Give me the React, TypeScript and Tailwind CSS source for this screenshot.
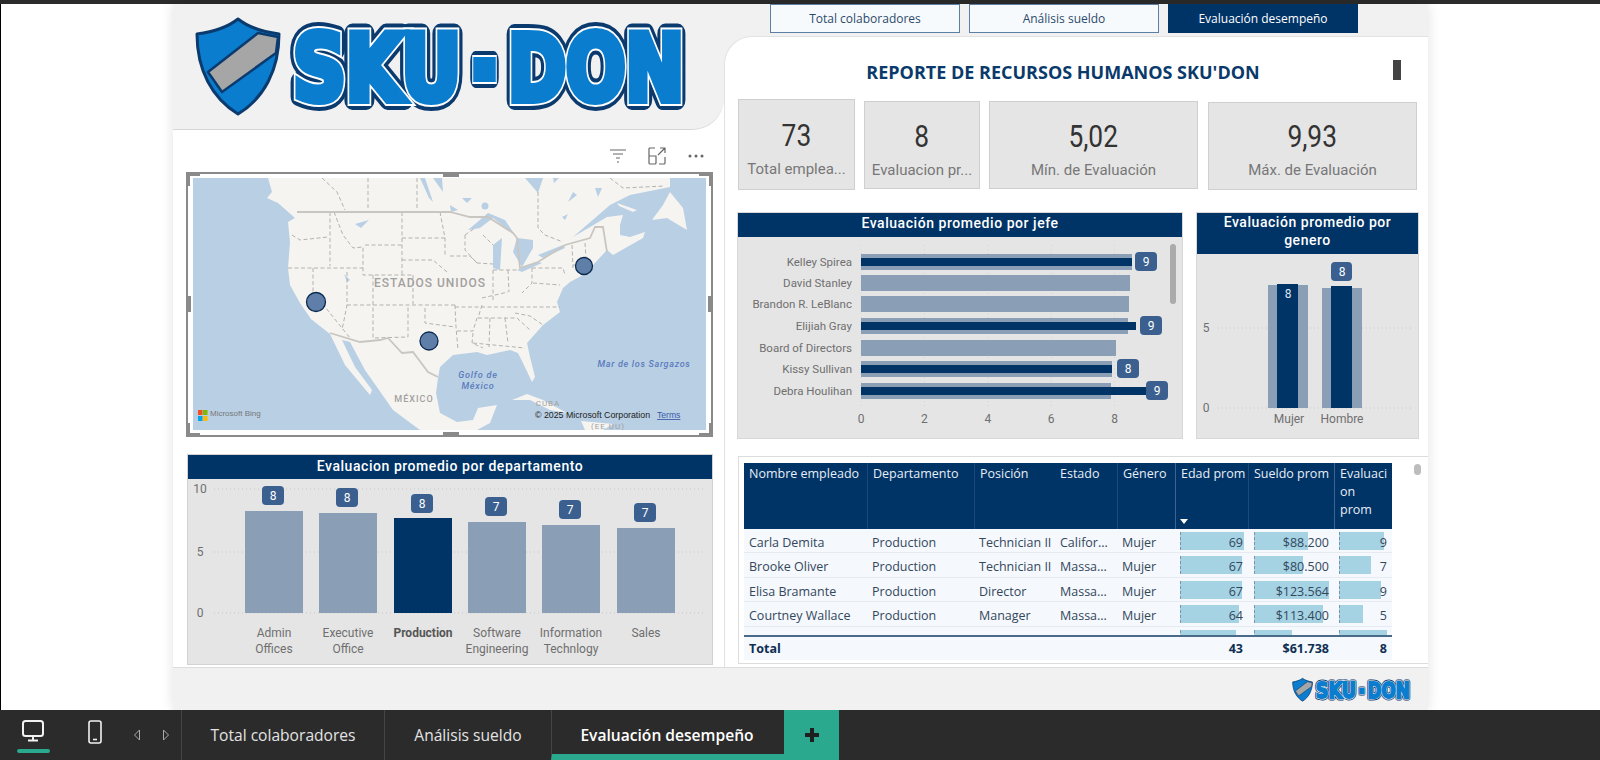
import React from "react";

const Logo = ({ id, className }: { id: string; className: string }) => (
  <svg viewBox="0 0 520 115" className={className}>
    <defs>
      <g id={id} fontFamily="'DejaVu Sans', sans-serif" fontWeight="700">
        <text x="103" y="90" fontSize="90" textLength="168" lengthAdjust="spacingAndGlyphs">SKU</text>
        <text x="282" y="94" fontSize="120" textLength="25" lengthAdjust="spacingAndGlyphs">-</text>
        <text x="318" y="90" fontSize="90" textLength="176" lengthAdjust="spacingAndGlyphs">DON</text>
      </g>
    </defs>
    <path d="M48 9C38 17 22 22 7 24C7 60 22 88 48 104C74 88 89 60 89 24C74 22 58 17 48 9Z" fill="#0a7dcf" stroke="#0b3a6e" strokeWidth="3" strokeLinejoin="round" />
    <path d="M68 23L88 27L86 43L32 82L18 62Z" fill="#a6a6a6" stroke="#0b3a6e" strokeWidth="2.5" strokeLinejoin="round" />
    <use href={`#${id}`} fill="#0b3a6e" stroke="#0b3a6e" strokeWidth="20" strokeLinejoin="round" />
    <use href={`#${id}`} fill="#fff" stroke="#fff" strokeWidth="12" strokeLinejoin="miter" />
    <use href={`#${id}`} fill="#0a7dcf" stroke="#0a7dcf" strokeWidth="8" strokeLinejoin="miter" />
  </svg>
);

const MapView = () => {
  const states =
    "M137 34L137 88M99 57L107 62L135 59M95 90L170 90M120 90L120 114L157 160M141 34L150 57L160 70L170 69L170 97L220 97M172 67L209 67M209 34L209 97M209 60L252 60M247 34L252 60L252 79M209 82L240 82L254 94M154 94L154 127L149 152M180 97L180 160L215 159L215 127M220 97L220 126M154 127L262 127M129 0L144 14L152 32M175 0L175 30M224 0L224 32M232 130L232 145L262 149M262 127L263 149L265 172M264 153L280 153L284 140M280 155L279 165L290 170M285 140L324 140L337 152M297 140L296 169M312 140L315 165M280 165L332 170M322 135L337 138L350 147M289 127L285 140M262 129L367 129M272 57L272 72L284 85L300 86M272 57L282 50M290 57L300 67M257 78L277 78L284 85M300 92L300 122M315 92L316 114M339 90L339 105L329 115M300 92L325 92M339 90L370 90L372 97M340 105L367 107M379 67L380 90M392 65L393 80M380 87L394 87M345 14L345 50L352 57L370 64M417 0L430 10L472 8M289 120L315 114";
  return (
    <svg viewBox="0 0 513 252" className="block w-[513px] h-[252px]">
      <rect width="513" height="252" fill="#b9cfe4" />
      <path
        fill="#f6f4f1"
        strokeLinejoin="round"
        d="M75 0L79 14L74 20L85 25L102 40L95 44L97 64L95 90L97 107L107 125L118 141L137 156L152 187L177 217L179 212L162 189L149 162L157 164L172 192L200 232L227 252L284 252L297 245L304 227L285 230L280 242L264 244L247 235L243 215L245 200L247 189L260 177L284 174L294 177L317 172L325 175L330 185L339 204L342 199L337 179L334 165L350 147L367 134L364 124L370 110L377 104L390 97L400 87L414 72L420 77L450 60L452 54L437 59L427 57L427 47L430 37L414 39L380 59L417 27L437 17L477 9L477 0Z"
      />
      <path fill="#f6f4f1" d="M477 14L490 30L494 52L489 49L474 40L459 42L470 27ZM319 222L334 216L350 222L374 235L357 232L337 222ZM388 243L420 246L410 252L392 252ZM424 25L444 32L440 34L426 28Z" />
      <path
        fill="#b9cfe4"
        d="M275 52L295 35L312 42L322 57L300 40L287 50ZM300 67L309 60L307 92L300 90ZM324 60L340 62L340 70L329 89L320 74ZM324 92L345 84L349 85L329 94ZM345 77L370 67L372 70L350 80ZM332 0L350 0L345 15ZM360 0L366 0L361 5ZM380 14L375 24L384 17ZM402 10L409 10L405 19ZM269 20L279 20L274 25ZM257 27L265 32L258 34ZM227 0L232 0L240 24L236 20ZM240 0L249 0L250 14ZM369 39L375 36L372 42ZM162 46L176 42L168 50ZM151 96L157 102L154 104Z"
      />
      <circle cx="292" cy="28" r="3.5" fill="#b9cfe4" />
      <path fill="none" stroke="#b4b2ae" strokeWidth="1" strokeDasharray="4 2.5" d={states} />
      <path fill="none" stroke="#c9c6c1" strokeWidth="1.8" d="M104 34L257 34L277 39L295 39L320 55L324 60L327 90L345 84L372 67L397 60L402 49L410 49L414 74M137 155L167 164L187 162L195 160L209 175L220 174L235 194L245 199" />
      {[[123, 124, 9.5], [236, 163, 9], [391, 88, 8.5]].map(([x, y, r]) => (
        <circle key={x} cx={x} cy={y} r={r} fill="#5f7fa8" stroke="#0b2a50" strokeWidth="1.3" />
      ))}
      <g fontFamily="Roboto, sans-serif">
        <text x="237" y="109" textAnchor="middle" fontSize="12" fontWeight="500" letterSpacing="1" fill="#a3a19e">ESTADOS UNIDOS</text>
        <text x="221" y="224" textAnchor="middle" fontSize="9" fontWeight="500" letterSpacing="1" fill="#a3a19e">MÉXICO</text>
        <text x="355" y="228" textAnchor="middle" fontSize="8" letterSpacing="1" fill="#a3a19e">CUBA</text>
        <text x="285" y="200" textAnchor="middle" fontSize="9" fontWeight="500" fontStyle="italic" letterSpacing="0.8" fill="#5a7cbd">Golfo de</text>
        <text x="285" y="211" textAnchor="middle" fontSize="9" fontWeight="500" fontStyle="italic" letterSpacing="0.8" fill="#5a7cbd">México</text>
        <text x="451" y="189" textAnchor="middle" fontSize="9" fontWeight="500" fontStyle="italic" letterSpacing="0.7" fill="#5a7cbd">Mar de los Sargazos</text>
        <text x="415" y="251" textAnchor="middle" fontSize="8" letterSpacing="1" fill="#a3a19e">(EE UU)</text>
      </g>
      <g fontFamily="'Liberation Sans', sans-serif">
        <text x="342" y="240" fontSize="8.8" fill="#222">© 2025 Microsoft Corporation</text>
        <text x="464" y="240" fontSize="8.6" fill="#3a5aa8" textDecoration="underline">Terms</text>
        <text x="17" y="238" fontSize="8" fill="#777">Microsoft Bing</text>
      </g>
      <rect x="5" y="232" width="4.5" height="5" fill="#f25022" />
      <rect x="10" y="232" width="4.5" height="5" fill="#7fba00" />
      <rect x="5" y="238" width="4.5" height="5" fill="#00a4ef" />
      <rect x="10" y="238" width="4.5" height="5" fill="#ffb900" />
    </svg>
  );
};

const Handle = ({ className }: { className: string }) => <span className={`absolute bg-[#8a8a8a] ${className}`} />;

const Kpi = ({ value, label, className, top }: { value: string; label: string; className: string; top: string }) => (
  <div className={`flex flex-col items-center justify-start bg-[#e5e5e5] border border-[#cfcfcf] ${className}`}>
    <div className={`text-[31px] leading-[34px] text-[#333] font-['Roboto'] scale-x-[0.85] ${top}`}>{value}</div>
    <div className="mt-[6px] text-[15px] leading-[20px] text-[#777] font-['Roboto'] whitespace-nowrap">{label}</div>
  </div>
);

const PanelHead = ({ children, className = "" }: { children: React.ReactNode; className?: string }) => (
  <div className={`bg-[#003366] text-white text-center font-['Roboto'] font-medium text-[14px] tracking-[0.55px] ${className}`}>{children}</div>
);

const tick = { fontSize: 12, fill: "#6f6f6f", fontFamily: "Roboto, sans-serif" };
const Bossy = [
  { n: "Kelley Spirea", l: 271, d: 271, b: 1135, y: 25 },
  { n: "David Stanley", l: 269, y: 46 },
  { n: "Brandon R. LeBlanc", l: 268, y: 67 },
  { n: "Elijiah Gray", l: 267, d: 275, b: 1140, y: 89 },
  { n: "Board of Directors", l: 255, y: 111 },
  { n: "Kissy Sullivan", l: 251, d: 251, b: 1117, y: 132 },
  { n: "Debra Houlihan", l: 250, d: 290, b: 1146, y: 154 },
];

const BossChart = () => (
  <svg viewBox="0 0 444 201" className="block w-[444px] h-[201px]">
    {[0, 2, 4, 6, 8].map((v) => (
      <g key={v}>
        <line x1={123 + v * 31.7} x2={123 + v * 31.7} y1="8" y2="172" stroke="#d3d3d3" strokeDasharray="1 3" />
        <text x={123 + v * 31.7} y="186" textAnchor="middle" {...tick}>{v}</text>
      </g>
    ))}
    {Bossy.map((r) => (
      <g key={r.n}>
        <text x="114" y={r.y + 4} textAnchor="end" {...tick} fontSize="11.5">{r.n}</text>
        <rect x="123" y={r.y - 8} width={r.l} height="16" fill="#8a9fb6" />
        {r.d && <rect x="123" y={r.y - 4} width={r.d} height="8" fill="#003366" />}
        {r.b && (
          <g>
            <rect x={r.b - 738} y={r.y - 10} width="22" height="19" rx="4" fill="#3b5f8f" />
            <text x={r.b - 727} y={r.y + 4} textAnchor="middle" fontSize="12" fontFamily="Roboto, sans-serif" fill="#fff">{r.n === "Kissy Sullivan" ? 8 : 9}</text>
          </g>
        )}
      </g>
    ))}
    <rect x="432" y="7" width="6" height="60" rx="3" fill="#ababab" />
  </svg>
);

const GenderChart = () => (
  <svg viewBox="0 0 221 184" className="block w-[221px] h-[184px]">
    {[[74, "5"], [154, "0"]].map(([y, t]) => (
      <g key={t as string}>
        <line x1="21" x2="215" y1={y as number} y2={y as number} stroke="#c6c6c6" strokeDasharray="1 3" />
        <text x="9" y={(y as number) + 4} textAnchor="middle" {...tick}>{t}</text>
      </g>
    ))}
    <rect x="71" y="31" width="40" height="123" fill="#8a9fb6" />
    <rect x="80" y="30" width="21" height="124" fill="#003366" />
    <rect x="125" y="34" width="40" height="120" fill="#8a9fb6" />
    <rect x="134" y="32" width="21" height="122" fill="#003366" />
    <rect x="134" y="8" width="21" height="19" rx="4" fill="#3b5f8f" />
    <text x="145" y="22" textAnchor="middle" fontSize="12" fontFamily="Roboto, sans-serif" fill="#fff">8</text>
    <text x="91" y="44" textAnchor="middle" fontSize="12" fontFamily="Roboto, sans-serif" fill="#dfe6ee">8</text>
    <text x="92" y="169" textAnchor="middle" {...tick}>Mujer</text>
    <text x="145" y="169" textAnchor="middle" {...tick}>Hombre</text>
  </svg>
);

const depts = [
  { x: 57, top: 32, box: 7, v: 8, l: ["Admin", "Offices"] },
  { x: 131, top: 34, box: 9, v: 8, l: ["Executive", "Office"] },
  { x: 206, top: 39, box: 15, v: 8, l: ["Production"], on: true },
  { x: 280, top: 43, box: 18, v: 7, l: ["Software", "Engineering"] },
  { x: 354, top: 46, box: 21, v: 7, l: ["Information", "Technlogy"] },
  { x: 429, top: 49, box: 24, v: 7, l: ["Sales"] },
];

const DeptChart = () => (
  <svg viewBox="0 0 524 185" className="block w-[524px] h-[185px]">
    {[[10, "10"], [73, "5"], [134, "0"]].map(([y, t]) => (
      <g key={t as string}>
        <line x1="26" x2="517" y1={y as number} y2={y as number} stroke="#c6c6c6" strokeDasharray="1 3" />
        <text x="12" y={(y as number) + 4} textAnchor="middle" {...tick}>{t}</text>
      </g>
    ))}
    {depts.map((d) => (
      <g key={d.x}>
        <rect x={d.x} y={d.top} width="58" height={134 - d.top} fill={d.on ? "#003366" : "#8a9fb6"} />
        <rect x={d.x + 17} y={d.box} width="22" height="19" rx="4" fill="#3b5f8f" />
        <text x={d.x + 28} y={d.box + 14} textAnchor="middle" fontSize="12" fontFamily="Roboto, sans-serif" fill="#fff">{d.v}</text>
        {d.l.map((t, i) => (
          <text key={t} x={d.x + 29} y={158 + i * 16} textAnchor="middle" fontSize="12" fontFamily="Roboto, sans-serif" fontWeight={d.on ? 700 : 400} fill={d.on ? "#555" : "#6f6f6f"}>{t}</text>
        ))}
      </g>
    ))}
  </svg>
);

const cols = "grid grid-cols-[123px_107px_81px_62px_58px_73px_86px_58px]";
const rows = [
  ["Carla Demita", "Production", "Technician II", "Califor...", "Mujer", "69", "$88.200", "9", 64, 54, 45],
  ["Brooke Oliver", "Production", "Technician II", "Massa...", "Mujer", "67", "$80.500", "7", 62, 49, 32],
  ["Elisa Bramante", "Production", "Director", "Massa...", "Mujer", "67", "$123.564", "9", 62, 75, 42],
  ["Courtney Wallace", "Production", "Manager", "Massa...", "Mujer", "64", "$113.400", "5", 59, 69, 24],
  ["", "", "", "", "", "", "", "", 56, 38, 48],
] as (string | number)[][];

const Bar = ({ v, w, ml }: { v: string; w: number; ml: string }) => (
  <div className="relative h-[23px] flex items-center justify-end pr-[5px] text-[12.5px]">
    <span className={`absolute top-[3px] bottom-[2px] bg-[#a5d3e4] border-l border-dashed border-l-[#7d93a8] ${ml}`} style={{ width: w }} />
    <span className="relative top-[2px]">{v}</span>
  </div>
);

const Table = () => (
  <div className="ml-[13px] mt-[18px] h-[208px] bg-white border border-r-0 border-[#dcdcdc] pt-[6px] pl-[5px] relative font-['Open_Sans'] text-[#33475b]">
    <div className={`${cols} w-[648px] h-[66px] bg-[#003366] text-[#e8eef5] text-[12.5px] leading-[18px]`}>
      {["Nombre empleado", "Departamento", "Posición", "Estado", "Género"].map((h, i) => (
        <div key={h} className={`pl-[5px] pt-[2px] whitespace-nowrap ${(i > 0 && i < 3) || i === 4 ? "border-l border-[#1c4a7a]" : ""}`}>{h}</div>
      ))}
      <div className="pl-[5px] pt-[2px] whitespace-nowrap border-l border-[#3a6592] relative">
        Edad prom
        <svg viewBox="0 0 8 5" className="absolute left-[4px] bottom-[5px] w-[8px] h-[5px]"><path d="M0 0H8L4 5Z" fill="#fff" /></svg>
      </div>
      <div className="pl-[5px] pt-[2px] whitespace-nowrap border-l border-[#1c4a7a]">Sueldo prom</div>
      <div className="pl-[5px] pt-[2px] border-l border-[#3a6592]">Evaluaci<br />on<br />prom</div>
    </div>
    <div className="w-[648px] h-[106px] overflow-hidden">
      {rows.map((r, i) => (
        <div key={i} className={`${cols} grid-rows-[23px] h-[24.4px] bg-[#f5f8fd] border-b border-[#e6ebf2] text-[12.5px] leading-[23px] whitespace-nowrap`}>
          {r.slice(0, 5).map((c, j) => <div key={j} className="pl-[5px] pt-[2px]">{c}</div>)}
          <Bar v={r[5] as string} w={r[8] as number} ml="left-[5px]" />
          <Bar v={r[6] as string} w={r[9] as number} ml="left-[6px]" />
          <Bar v={r[7] as string} w={r[10] as number} ml="left-[5px]" />
        </div>
      ))}
    </div>
    <div className={`${cols} w-[648px] h-[25px] bg-[#f5f8fd] border-t-2 border-[#4a6a8a] text-[12.5px] font-bold text-[#0e2f52] leading-[24px]`}>
      <div className="pl-[5px] col-span-5">Total</div>
      <div className="text-right pr-[5px]">43</div>
      <div className="text-right pr-[5px]">$61.738</div>
      <div className="text-right pr-[5px]">8</div>
    </div>
    <span className="absolute right-[7px] top-[7px] w-[7px] h-[11px] rounded-full bg-[#bdbdbd]" />
  </div>
);

export default function App() {
  return (
    <div className="h-[760px] w-[1600px] flex flex-col bg-white overflow-hidden font-['Open_Sans',sans-serif]">
      <div className="h-[4px] bg-[#2b2b2b]" />
      <div className="flex-1 flex border-l border-black pl-[172px] min-h-0">
        <div className="w-[1255px] flex flex-col bg-[#f1f1f1] shadow-[0_0_12px_rgba(0,0,0,0.12)]">
          <div className="h-[663px] flex">
            <div className="w-[551px] bg-white">
              <div className="h-[126px] bg-[#f1f1f1] border-b border-[#d6d6d6] rounded-br-[32px] pt-[6px] pl-[17px]">
                <Logo id="sku-big" className="block w-[520px] h-[115px]" />
              </div>
              <div className="h-[42px] flex items-center justify-end gap-[19px] pr-[20px] pt-[9px]">
                <svg viewBox="0 0 20 16" className="w-[20px] h-[16px]" fill="none" stroke="#666" strokeWidth="1.2"><path d="M2 2H18M5 6H15M8 10H12M9 14H11" /></svg>
                <svg viewBox="0 0 20 20" className="w-[20px] h-[20px]" fill="none" stroke="#666" strokeWidth="1.2"><path d="M8 2H3A1 1 0 0 0 2 3V17A1 1 0 0 0 3 18H8A1 1 0 0 0 9 17V10H2M12 18H17A1 1 0 0 0 18 17V11M11 9L18 2M13 2H18V7" /></svg>
                <svg viewBox="0 0 16 4" className="w-[16px] h-[4px] ml-[2px]" fill="#666"><circle cx="2" cy="2" r="1.5" /><circle cx="8" cy="2" r="1.5" /><circle cx="14" cy="2" r="1.5" /></svg>
              </div>
              <div className="relative ml-[13px] w-[527px] h-[265px] border-2 border-[#8a8a8a] px-[5px] pt-[4px]">
                <MapView />
                <Handle className="-left-[2px] -top-[2px] w-[14px] h-[4px]" />
                <Handle className="-left-[2px] -top-[2px] w-[4px] h-[14px]" />
                <Handle className="-right-[2px] -top-[2px] w-[14px] h-[4px]" />
                <Handle className="-right-[2px] -top-[2px] w-[4px] h-[14px]" />
                <Handle className="-left-[2px] -bottom-[2px] w-[14px] h-[4px]" />
                <Handle className="-left-[2px] -bottom-[2px] w-[4px] h-[14px]" />
                <Handle className="-right-[2px] -bottom-[2px] w-[14px] h-[4px]" />
                <Handle className="-right-[2px] -bottom-[2px] w-[4px] h-[14px]" />
                <Handle className="left-[255px] -top-[2px] w-[16px] h-[5px]" />
                <Handle className="left-[255px] -bottom-[2px] w-[16px] h-[5px]" />
                <Handle className="-left-[2px] top-[122px] w-[5px] h-[16px]" />
                <Handle className="-right-[2px] top-[122px] w-[5px] h-[16px]" />
              </div>
              <div className="ml-[15px] mt-[18px] w-[524px] h-[209px] bg-[#e5e5e5] ring-1 ring-[#d2d2d2]">
                <PanelHead className="h-[24px] leading-[22px]">Evaluacion promedio por departamento</PanelHead>
                <DeptChart />
              </div>
            </div>
            <div className="flex-1 flex flex-col">
              <div className="h-[31px] flex items-start gap-[9px] pl-[46px]">
                {["Total colaboradores", "Análisis sueldo"].map((t) => (
                  <div key={t} className="w-[190px] h-[29px] bg-[#f7fafd] border border-[#5d7fa3] flex items-center justify-center text-[12px] text-[#2c4a6b]">{t}</div>
                ))}
                <div className="w-[190px] h-[29px] bg-[#003366] flex items-center justify-center text-[12px] text-white">Evaluación desempeño</div>
              </div>
              <div className="flex-1 bg-white rounded-tl-[28px] border-t border-l border-[#e2e2e2] mt-[1px]">
                <div className="h-[62px] flex items-center relative">
                  <h1 className="w-full pl-[6px] pr-[33px] mt-[9px] text-center text-[18px] font-bold text-[#0a3a6b]">REPORTE DE RECURSOS HUMANOS SKU'DON</h1>
                  <span className="absolute left-[668px] top-[23px] w-[8px] h-[20px] bg-[#444]" />
                </div>
                <div className="flex items-start pl-[13px] h-[91px]">
                  <Kpi value="73" label="Total emplea..." className="w-[117px] h-[91px]" top="mt-[19px]" />
                  <Kpi value="8" label="Evaluacion pr..." className="w-[116px] h-[88px] ml-[9px] mt-[2px]" top="mt-[18px]" />
                  <Kpi value="5,02" label="Mín. de Evaluación" className="w-[209px] h-[88px] ml-[9px] mt-[2px]" top="mt-[18px]" />
                  <Kpi value="9,93" label="Máx. de Evaluación" className="w-[209px] h-[88px] ml-[10px] mt-[3px]" top="mt-[17px]" />
                </div>
                <div className="flex gap-[15px] pl-[13px] mt-[23px]">
                  <div className="w-[444px] h-[225px] bg-[#e5e5e5] ring-1 ring-[#d8d8d8]">
                    <PanelHead className="h-[24px] leading-[20px]">Evaluación promedio por jefe</PanelHead>
                    <BossChart />
                  </div>
                  <div className="w-[221px] h-[225px] bg-[#e5e5e5] ring-1 ring-[#d8d8d8]">
                    <PanelHead className="h-[41px] leading-[18px] px-[8px]">Evaluación promedio por genero</PanelHead>
                    <GenderChart />
                  </div>
                </div>
                <Table />
              </div>
            </div>
          </div>
          <div className="flex-1 border-t border-[#dcdcdc] flex justify-end items-start pt-[8px] pr-[12px]">
            <Logo id="sku-small" className="block w-[125px] h-[28px]" />
          </div>
        </div>
      </div>
      <div className="h-[50px] bg-[#2b2b2b] flex items-stretch text-[15.6px] text-[#e3e3e3] shrink-0">
        <div className="w-[72px] relative flex justify-center pt-[10px]">
          <svg viewBox="0 0 24 22" className="w-[24px] h-[22px] ml-[-6px]" fill="none" stroke="#f2f2f2" strokeWidth="2"><rect x="2" y="1" width="20" height="15" rx="2.5" /><path d="M12 16V20M7 20.5H17" /></svg>
          <span className="absolute left-[17px] top-[39px] w-[33px] h-[4px] rounded-full bg-[#2aa98f]" />
        </div>
        <div className="w-[46px] flex pt-[10px] justify-center">
          <svg viewBox="0 0 14 24" className="w-[14px] h-[24px]" fill="none" stroke="#f2f2f2" strokeWidth="1.6"><rect x="1" y="1" width="12" height="22" rx="2" /><path d="M5 19.5H9" /></svg>
        </div>
        <div className="w-[64px] flex items-center justify-center gap-[21px] pl-[4px] border-r border-[#444]">
          <svg viewBox="0 0 8 12" className="w-[8px] h-[12px]" fill="none" stroke="#aaa"><path d="M6.5 1L1.5 6L6.5 11Z" /></svg>
          <svg viewBox="0 0 8 12" className="w-[8px] h-[12px]" fill="none" stroke="#aaa"><path d="M1.5 1L6.5 6L1.5 11Z" /></svg>
        </div>
        <div className="w-[203px] flex items-center justify-center border-r border-[#444] pt-[2px]">Total colaboradores</div>
        <div className="w-[166px] flex items-center justify-center pt-[2px]">Análisis sueldo</div>
        <div className="w-[233px] flex items-center justify-center font-semibold text-white border-l border-[#444] border-b-[6px] border-b-[#2aa98f] pt-[7px] pr-[2px]">Evaluación desempeño</div>
        <div className="w-[55px] bg-[#2aa98f] flex items-center justify-center">
          <svg viewBox="0 0 16 16" className="w-[16px] h-[16px]" fill="#1f1f1f"><path d="M6 1H10V6H15V10H10V15H6V10H1V6H6Z" /></svg>
        </div>
      </div>
    </div>
  );
}
